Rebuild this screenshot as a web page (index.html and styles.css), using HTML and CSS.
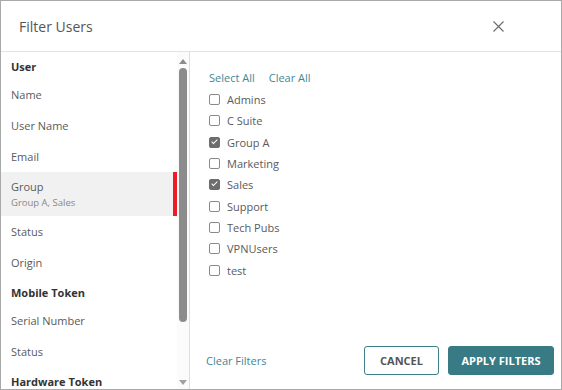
FILE: index.html
```html
<!DOCTYPE html>
<html>
<head>
    <title>Filter Users</title>
    <link rel="stylesheet" href="styles.css">
</head>
<body>
    <div class="dialog">
        <div class="dialog-header">
            <span class="dialog-title">Filter Users</span>
            <svg class="close-icon" width="11" height="11" viewBox="0 0 11 11">
                <path d="M0.5 0.5 L10.5 10.5 M10.5 0.5 L0.5 10.5" stroke="#6b6b6b" stroke-width="1.1" fill="none"/>
            </svg>
        </div>

        <div class="dialog-body">
            <!-- 左侧字段列表 -->
            <div class="sidebar">
                <div class="field-list">
                    <div class="section-title">User</div>
                    <div class="field">Name</div>
                    <div class="field">User Name</div>
                    <div class="field">Email</div>
                    <div class="field field-active">
                        <div>Group</div>
                        <div class="field-value">Group A, Sales</div>
                    </div>
                    <div class="field">Status</div>
                    <div class="field">Origin</div>
                    <div class="section-title">Mobile Token</div>
                    <div class="field">Serial Number</div>
                    <div class="field">Status</div>
                    <div class="section-title">Hardware Token</div>
                </div>
                <div class="scrollbar">
                    <span class="arrow arrow-up"></span>
                    <span class="thumb"></span>
                    <span class="arrow arrow-down"></span>
                </div>
            </div>

            <!-- 右侧选项 -->
            <div class="content">
                <div class="options">
                    <div class="links">
                        <a class="link">Select All</a>
                        <a class="link">Clear All</a>
                    </div>
                    <label class="option"><span class="box"></span>Admins</label>
                    <label class="option"><span class="box"></span>C Suite</label>
                    <label class="option"><span class="box checked"></span>Group A</label>
                    <label class="option"><span class="box"></span>Marketing</label>
                    <label class="option"><span class="box checked"></span>Sales</label>
                    <label class="option"><span class="box"></span>Support</label>
                    <label class="option"><span class="box"></span>Tech Pubs</label>
                    <label class="option"><span class="box"></span>VPNUsers</label>
                    <label class="option"><span class="box"></span>test</label>
                </div>

                <div class="footer">
                    <a class="link">Clear Filters</a>
                    <div class="buttons">
                        <button class="btn btn-outline">CANCEL</button>
                        <button class="btn btn-primary">APPLY FILTERS</button>
                    </div>
                </div>
            </div>
        </div>
    </div>
</body>
</html>
```

FILE: styles.css
```css
body { margin: 0; font-family: "Open Sans", "Liberation Sans", sans-serif; background: #fff; }
.dialog { width: 562px; height: 390px; box-sizing: border-box; border: 1px solid #a9a9a9; display: flex; flex-direction: column; overflow: hidden; }

.dialog-header { height: 50px; flex: none; border-bottom: 1px solid #e3e3e3; display: flex; align-items: center; justify-content: space-between; padding: 0 57px 0 18px; }
.dialog-title { font-size: 14px; color: #555; }
.close-icon { display: block; }

.dialog-body { flex: 1; display: flex; min-height: 0; }

.sidebar { width: 188px; flex: none; display: flex; border-right: 1px solid #dedede; overflow: hidden; }
.field-list { width: 176px; flex: none; font-size: 11px; color: #5a5a5a; }
.section-title { padding: 5px 10px 2px; line-height: 20px; font-weight: 700; color: #333; }
.field { padding: 0 10px; line-height: 31px; }
.field-active { line-height: 18px; padding-top: 6px; padding-bottom: 6px; background: #f1f1f1; box-shadow: inset -4px 0 0 #ee1c25; }
.field-value { font-size: 9.5px; line-height: 14px; color: #888; }

.scrollbar { width: 12px; flex: none; background: #fbfbfb; display: flex; flex-direction: column; align-items: center; padding: 7px 0 4px; box-sizing: border-box; }
.thumb { width: 8px; height: 254px; margin: 4px 0 auto; border-radius: 4px; background: #8c8c8c; }
.arrow { width: 0; height: 0; border-left: 4px solid transparent; border-right: 4px solid transparent; }
.arrow-up { border-bottom: 5px solid #8c8c8c; }
.arrow-down { border-top: 5px solid #a0a0a0; }

.content { flex: 1; display: flex; flex-direction: column; }
.options { flex: 1; padding: 17px 0 0 19px; font-size: 11px; color: #5a5a5a; }
.links { display: flex; gap: 14px; line-height: 18px; margin-bottom: 2px; }
.link { color: #3f8794; font-size: 11px; cursor: pointer; }
.option { display: flex; align-items: center; gap: 7px; height: 21.3px; }
.box { width: 9px; height: 9px; border: 1px solid #8a8a8a; border-radius: 2px; background: #fff; position: relative; }
.box.checked { background: #6d6d6d; border-color: #6d6d6d; }
.box.checked::after { content: ""; position: absolute; left: 3px; top: 0px; width: 2px; height: 5px; border: solid #fff; border-width: 0 1.5px 1.5px 0; transform: rotate(45deg); }

.footer { display: flex; align-items: center; justify-content: space-between; padding: 0 7px 14px 16px; }
.buttons { display: flex; gap: 9px; }
.btn { height: 29px; border-radius: 3px; font-family: "Open Sans", "Liberation Sans", sans-serif; font-size: 11px; font-weight: 700; padding: 0; }
.btn-outline { width: 75px; background: #fff; border: 1px solid #3f7f88; color: #555; }
.btn-primary { width: 106px; background: #387b85; border: 1px solid #387b85; color: #fff; }
```
